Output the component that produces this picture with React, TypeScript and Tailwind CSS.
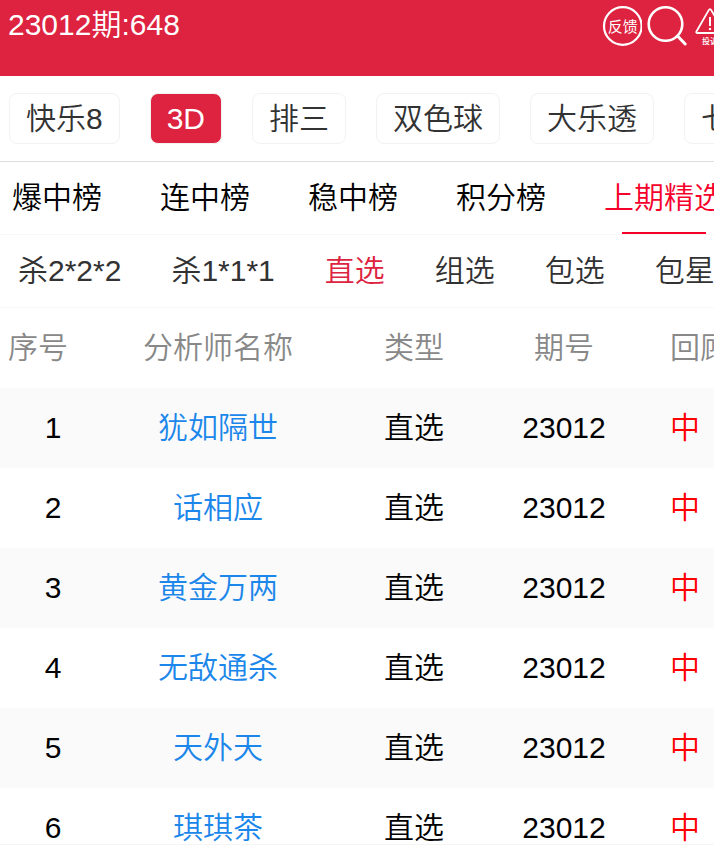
import { useState } from "react";

const LOTTERIES = ["快乐8", "3D", "排三", "双色球", "大乐透", "七乐彩"];
const RANKINGS = ["爆中榜", "连中榜", "稳中榜", "积分榜", "上期精选"];
const PLAY_TYPES = ["杀2*2*2", "杀1*1*1", "直选", "组选", "包选", "包星"];

const ROWS = [
  { id: 1, name: "犹如隔世" },
  { id: 2, name: "话相应" },
  { id: 3, name: "黄金万两" },
  { id: 4, name: "无敌通杀" },
  { id: 5, name: "天外天" },
  { id: 6, name: "琪琪茶" },
];

function FeedbackIcon() {
  return (
    <svg width="40" height="52" viewBox="0 0 40 52" fill="none" aria-hidden="true">
      <circle cx="20.8" cy="26" r="18.8" stroke="white" strokeWidth="2.2" />
      <text x="20.8" y="31.5" textAnchor="middle" fontSize="15" fontWeight="400" fill="white">
        反馈
      </text>
    </svg>
  );
}

function SearchIcon() {
  return (
    <svg width="42" height="52" viewBox="0 0 42 52" fill="none" aria-hidden="true">
      <circle cx="19.5" cy="24" r="16.8" stroke="white" strokeWidth="2.6" />
      <path d="M31.5 36L39.2 44" stroke="white" strokeWidth="3" strokeLinecap="round" />
    </svg>
  );
}

function ComplaintIcon() {
  return (
    <svg width="38" height="52" viewBox="0 0 38 52" fill="none" aria-hidden="true">
      <path
        d="M16.6 10.4Q18 8 19.4 10.4L31.4 31.2Q32.4 33 30.4 33H5.6Q3.6 33 4.6 31.2Z"
        stroke="white"
        strokeWidth="1.8"
      />
      <path d="M18 17V26" stroke="white" strokeWidth="2" />
      <circle cx="18" cy="29" r="1.2" fill="white" />
      <text x="18" y="43.5" textAnchor="middle" fontSize="8" fontWeight="500" fill="white">
        投诉
      </text>
    </svg>
  );
}

export default function App() {
  const [lottery, setLottery] = useState("3D");
  const [ranking, setRanking] = useState("上期精选");
  const [playType, setPlayType] = useState("直选");

  return (
    <div className="flex h-screen flex-col overflow-hidden bg-white pb-[9px] font-['Liberation_Sans','Noto_Sans_CJK_SC',sans-serif] text-[30px] leading-[45px] font-[350] text-black">
      <header className="flex h-[76px] shrink-0 items-start justify-between bg-[#dd2340] pl-2 text-white">
        <h1 className="pt-[2px] font-[350] whitespace-nowrap">23012期:648</h1>
        <div className="-mr-4 flex shrink-0 gap-1">
          <button type="button" aria-label="反馈">
            <FeedbackIcon />
          </button>
          <button type="button" aria-label="搜索">
            <SearchIcon />
          </button>
          <button type="button" aria-label="投诉">
            <ComplaintIcon />
          </button>
        </div>
      </header>

      <nav className="flex shrink-0 gap-[30px] overflow-hidden border-b border-[#dcdfe0] py-[17px] pl-[9px]">
        {LOTTERIES.map((item) => (
          <button
            key={item}
            type="button"
            onClick={() => setLottery(item)}
            className={`h-[51px] shrink-0 rounded-lg border border-[#f2f2f2] px-4 whitespace-nowrap ${
              item === lottery ? "bg-[#dd2340] text-white" : "text-[#323233]"
            }`}
          >
            {item}
          </button>
        ))}
      </nav>

      <nav className="flex shrink-0 gap-[58px] overflow-hidden border-b border-[#f8f8f8] pl-3">
        {RANKINGS.map((item) => (
          <button
            key={item}
            type="button"
            onClick={() => setRanking(item)}
            className={`flex h-[72px] shrink-0 flex-col items-center justify-between pt-[13px] whitespace-nowrap ${
              item === ranking ? "text-[#f5002b]" : ""
            }`}
          >
            {item}
            {item === ranking && <span className="h-[2px] w-[84px] bg-[#f5002b]" />}
          </button>
        ))}
      </nav>

      <nav className="flex shrink-0 gap-[50px] overflow-hidden border-b border-[#f8f8f8] pl-[18px]">
        {PLAY_TYPES.map((item) => (
          <button
            key={item}
            type="button"
            onClick={() => setPlayType(item)}
            className={`h-[72px] shrink-0 pb-[2px] whitespace-nowrap ${
              item === playType ? "text-[#dd2340]" : "text-[#323233]"
            }`}
          >
            {item}
          </button>
        ))}
      </nav>

      <main className="min-h-0 flex-1 overflow-hidden border-b border-[#f5f5f5]">
        <table className="w-full min-w-[770px] table-fixed text-center">
          <colgroup>
            <col className="w-[106px]" />
            <col className="w-[224px]" />
            <col className="w-[168px]" />
            <col className="w-[132px]" />
            <col />
          </colgroup>
          <thead>
            <tr className="h-20 text-[#888888]">
              <th className="pb-[2px] pl-2 text-left font-[350]">序号</th>
              <th className="pb-[2px] font-[350]">分析师名称</th>
              <th className="pb-[2px] font-[350]">类型</th>
              <th className="pb-[2px] font-[350]">期号</th>
              <th className="pb-[2px] pl-10 text-left font-[350]">回顾</th>
            </tr>
          </thead>
          <tbody>
            {ROWS.map((row) => (
              <tr key={row.id} className="h-20 odd:bg-[#fafafa]">
                <td className="pb-[2px]">{row.id}</td>
                <td className="pb-[2px]">
                  <a href="#" className="text-[#1c87ea]">
                    {row.name}
                  </a>
                </td>
                <td className="pb-[2px]">直选</td>
                <td className="pb-[2px]">23012</td>
                <td className="pb-[2px] pl-10 text-left text-[#ff0000]">中</td>
              </tr>
            ))}
          </tbody>
        </table>
      </main>
    </div>
  );
}
